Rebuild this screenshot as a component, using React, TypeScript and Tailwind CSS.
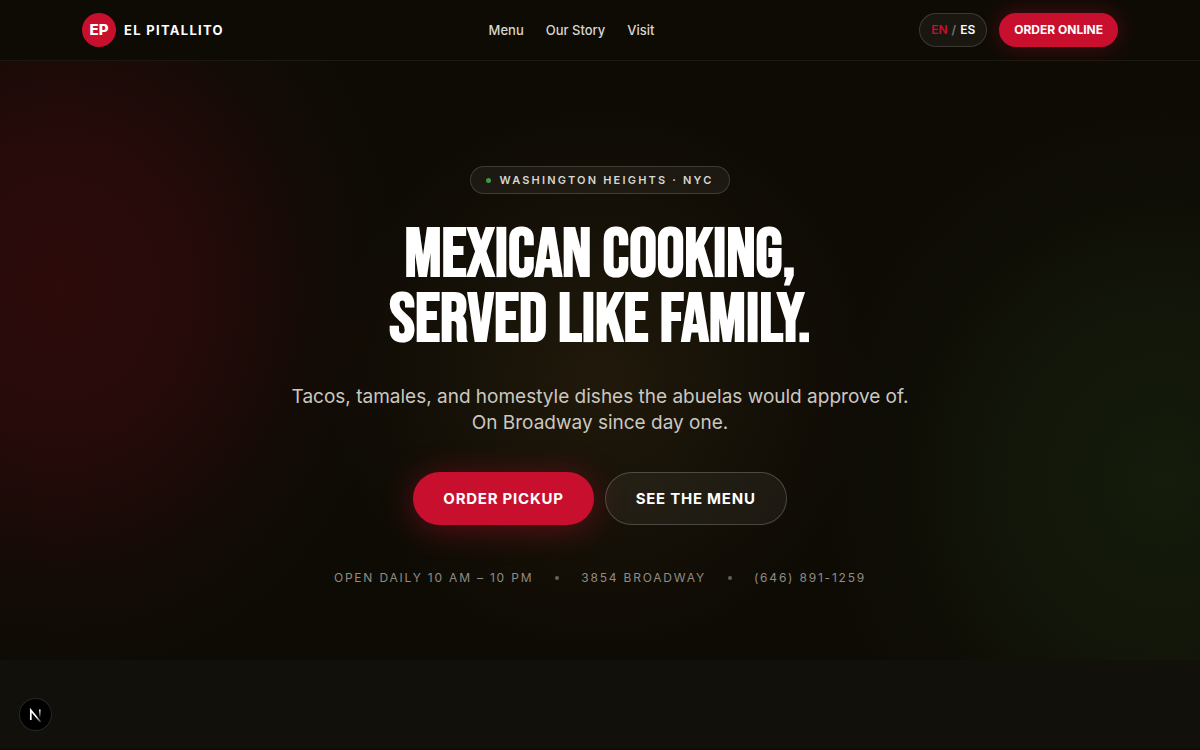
import React, { useState } from 'react';

type Lang = 'en' | 'es';

const navLinks = [
  { label: 'Menu', href: '#menu' },
  { label: 'Our Story', href: '#story' },
  { label: 'Visit', href: '#visit' },
];

const Header: React.FC = () => {
  const [lang, setLang] = useState<Lang>('en');

  return (
    <header className="border-b border-white/6 bg-[#0e0b05]">
      <div className="mx-auto flex h-15 w-full max-w-[1084px] items-center justify-between px-6">
        <a href="#top" className="flex items-center gap-2">
          <span className="flex size-[34px] items-center justify-center rounded-full bg-[#c8102e] text-[15px] leading-5 font-extrabold">EP</span>
          <span className="text-[13px] leading-5 font-bold tracking-widest">EL PITALLITO</span>
        </a>

        <nav className="flex items-center gap-[22px] text-[13px] leading-5 font-medium text-[#d9d6cf]">
          {navLinks.map((link) => (
            <a key={link.label} href={link.href} className="hover:text-white">{link.label}</a>
          ))}
        </nav>

        <div className="flex items-center gap-3">
          <button
            type="button"
            aria-label="Switch language"
            onClick={() => setLang(lang === 'en' ? 'es' : 'en')}
            className="flex h-[34px] items-center gap-1 rounded-full border border-white/15 bg-white/5 px-[11px] text-[12px] leading-4 font-semibold"
          >
            <span className={lang === 'en' ? 'text-[#c8102e]' : 'text-white'}>EN</span>
            <span className="text-white/40">/</span>
            <span className={lang === 'es' ? 'text-[#c8102e]' : 'text-white'}>ES</span>
          </button>
          <a
            href="#order"
            className="flex h-[34px] items-center rounded-full bg-[#c8102e] px-[15px] text-[12px] leading-4 font-bold shadow-[0_0_22px_rgba(200,16,46,0.35)]"
          >
            ORDER ONLINE
          </a>
        </div>
      </div>
    </header>
  );
};

const Hero: React.FC = () => (
  <section className="relative overflow-hidden px-6 pt-[105px] pb-[74px] text-center">
    {/* Flag colored glows */}
    <div className="absolute inset-0 bg-[radial-gradient(ellipse_340px_390px_at_5%_38%,rgba(200,8,40,0.17),rgba(200,8,40,0.12)_40%,rgba(200,8,40,0.03)_75%,rgba(200,8,40,0)),radial-gradient(ellipse_340px_370px_at_97%_70%,rgba(60,130,50,0.14),rgba(60,130,50,0.10)_40%,rgba(60,130,50,0.03)_75%,rgba(60,130,50,0)),radial-gradient(circle_270px_at_50%_53%,rgba(180,140,60,0.11),rgba(180,140,60,0.06)_45%,rgba(180,140,60,0))]" />

    <div className="relative flex flex-col items-center">
      <p className="flex h-7 items-center gap-2 rounded-full border border-white/15 bg-white/5 px-[15px] text-[11px] leading-4 font-semibold tracking-[0.2em] text-[#d9d6cf]">
        <span className="size-[5px] rounded-full bg-[#3f9a45]" />
        WASHINGTON HEIGHTS · NYC
      </p>

      <h1 className="mt-[29px] font-['Bebas_Neue','Liberation_Sans_Narrow',sans-serif] text-[69px] leading-[65px] font-bold">
        MEXICAN COOKING,
        <br />
        SERVED LIKE FAMILY.
      </h1>

      <p className="mt-[31px] text-[19px] leading-[26px] text-[#cbc8c0]">
        Tacos, tamales, and homestyle dishes the abuelas would approve of.
        <br />
        On Broadway since day one.
      </p>

      <div className="mt-9 flex flex-wrap justify-center gap-[11px] text-[15px] leading-5 font-bold tracking-wider">
        <a href="#order" className="flex h-[53px] items-center rounded-full bg-[#c8102e] px-[30px] shadow-[0_4px_32px_rgba(200,16,46,0.4)]">ORDER PICKUP</a>
        <a href="#menu" className="flex h-[53px] items-center rounded-full border border-white/20 bg-white/5 px-[30px]">SEE THE MENU</a>
      </div>

      <ul className="mt-[45px] flex flex-wrap items-center justify-center gap-[22px] text-[12px] leading-4 tracking-[0.15em] text-[#8f8c85]">
        <li>OPEN DAILY 10 AM – 10 PM</li>
        <li aria-hidden="true" className="size-1 rounded-full bg-white/35" />
        <li>3854 BROADWAY</li>
        <li aria-hidden="true" className="size-1 rounded-full bg-white/35" />
        <li>(646) 891-1259</li>
      </ul>
    </div>
  </section>
);

const DevBadge: React.FC = () => (
  <button
    type="button"
    aria-label="Open dev tools"
    className="fixed bottom-[19px] left-[19px] flex size-[33px] items-center justify-center rounded-full border border-white/15 bg-black"
  >
    <svg width="13" height="14" viewBox="0 0 13 14" fill="none">
      <defs>
        <linearGradient id="stem" x1="0" y1="1" x2="0" y2="10" gradientUnits="userSpaceOnUse">
          <stop stopColor="#fff" />
          <stop offset="1" stopColor="#fff" stopOpacity="0" />
        </linearGradient>
        <linearGradient id="diagonal" x1="7" y1="8" x2="12" y2="14" gradientUnits="userSpaceOnUse">
          <stop stopColor="#fff" />
          <stop offset="1" stopColor="#fff" stopOpacity="0.2" />
        </linearGradient>
      </defs>
      <path d="M1.8 12V2.2L11.6 14" stroke="url(#diagonal)" strokeWidth="1.7" />
      <path d="M10.8 1.5V11" stroke="url(#stem)" strokeWidth="1.6" />
    </svg>
  </button>
);

const App: React.FC = () => {
  return (
    <div id="top" className="flex min-h-screen flex-col bg-[#0e0b05] font-['Inter',sans-serif] text-white">
      <Header />
      <main className="flex flex-1 flex-col">
        <Hero />
        <div className="mb-0.5 flex-1 bg-[#12100a]" />
      </main>
      <DevBadge />
    </div>
  );
};

export default App;
